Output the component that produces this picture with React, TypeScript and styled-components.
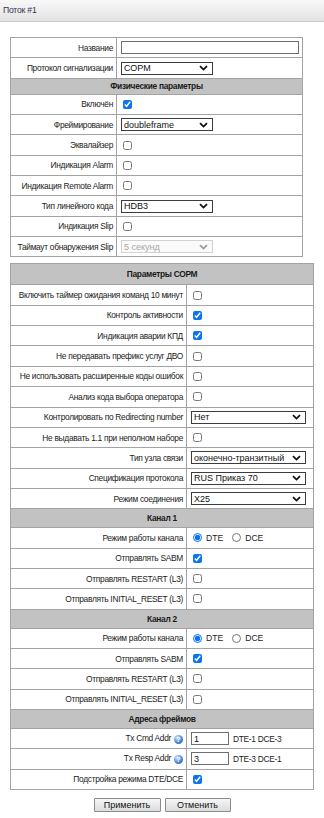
import styled, { createGlobalStyle } from "styled-components";

const GlobalStyle = createGlobalStyle`
    body {
        margin: 0;
        background: #fff;
        font-family: "Liberation Sans", Arial, sans-serif;
        font-size: 8.4px;
        letter-spacing: -0.3px;
        color: #1c1c1c;
    }
`;

const TitleBar = styled.div`
    height: 21px;
    line-height: 20px;
    padding-left: 3px;
    font-size: 8.6px;
    letter-spacing: -0.2px;
    color: #3a3550;
    background: linear-gradient(#f8f8f8, #e2e2e2);
    border-bottom: 1px solid #c9c9c9;
`;

const Content = styled.div`
    padding: 15px 10px 0 10px;
`;

const Table = styled.table<{ $width: number; $labelWidth: number }>`
    width: ${(p) => p.$width}px;
    border-collapse: collapse;
    table-layout: fixed;
    margin-bottom: 6px;

    col:first-child {
        width: ${(p) => p.$labelWidth}px;
    }
`;

const LabelCell = styled.td`
    height: 19.35px;
    padding: 0 3px 0 2px;
    border: 1px solid #a3a3a3;
    text-align: right;
    white-space: nowrap;
    vertical-align: middle;
`;

const ValueCell = styled.td`
    height: 19.35px;
    padding: 0 4px;
    border: 1px solid #a3a3a3;
    vertical-align: middle;
`;

const HeaderCell = styled.th<{ $height: number }>`
    height: ${(p) => p.$height}px;
    padding: 0;
    background: #c2c2c2;
    border: 1px solid #a3a3a3;
    font-weight: bold;
    color: #1a1a1a;
    text-align: center;
    vertical-align: middle;
`;

const Inline = styled.div`
    display: flex;
    align-items: center;
`;

const Check = styled.input.attrs({ type: "checkbox", readOnly: true })`
    width: 9px;
    height: 9px;
    margin: 0 0 0 2px;
    accent-color: #0b74f0;
    display: block;
`;

const Radio = styled.input.attrs({ type: "radio", readOnly: true })`
    width: 9px;
    height: 9px;
    margin: 0 4px 0 2px;
    accent-color: #0b74f0;
    display: block;
`;

const RadioText = styled.span`
    margin-right: 7px;
    font-size: 8.6px;
    letter-spacing: 0;
`;

const TextInput = styled.input.attrs({ type: "text", readOnly: true })<{ $width: number }>`
    width: ${(p) => p.$width}px;
    height: 13px;
    box-sizing: border-box;
    margin: 0;
    padding: 0 2px;
    border: 1px solid #6f6f6f;
    font-family: "Liberation Sans", Arial, sans-serif;
    font-size: 9px;
    color: #111;
    display: block;
`;

const SelectBox = styled.div<{ $width: number; $disabled?: boolean }>`
    width: ${(p) => p.$width}px;
    height: 13px;
    box-sizing: border-box;
    display: flex;
    align-items: center;
    justify-content: space-between;
    padding: 0 4px 0 2px;
    border: 1px solid ${(p) => (p.$disabled ? "#d2d2d2" : "#3c3c3c")};
    background: ${(p) => (p.$disabled ? "#fafafa" : "#fff")};
    color: ${(p) => (p.$disabled ? "#a6a6a6" : "#111")};
    font-size: 9px;
    letter-spacing: 0;
`;

const Hint = styled.span`
    margin-left: 4px;
`;

const HelpIcon = styled.span`
    display: inline-block;
    width: 9px;
    height: 9px;
    margin-left: 3px;
    border-radius: 50%;
    background: radial-gradient(circle at 35% 30%, #d6e6ff, #3f7fd6 60%, #2a5fb0);
    color: #fff;
    font-size: 7px;
    font-weight: bold;
    letter-spacing: 0;
    line-height: 9px;
    text-align: center;
    vertical-align: -1px;
`;

const ButtonRow = styled.div`
    width: 304px;
    display: flex;
    justify-content: center;
    gap: 4px;
    padding-top: 2px;
`;

const Button = styled.button<{ $width: number }>`
    width: ${(p) => p.$width}px;
    height: 14px;
    padding: 0;
    box-sizing: border-box;
    border: 1px solid #8a8a8a;
    border-radius: 1px;
    background: linear-gradient(#f6f6f6, #dcdcdc);
    font-family: "Liberation Sans", Arial, sans-serif;
    font-size: 9px;
    color: #111;
    line-height: 12px;
`;

function Chevron({ color }: { color: string }) {
    return (
        <svg width="9" height="6" viewBox="0 0 9 6">
            <path d="M1 1.2 L4.5 4.6 L8 1.2" fill="none" stroke={color} strokeWidth="1.8" />
        </svg>
    );
}

function Select({ value, width, disabled }: { value: string; width: number; disabled?: boolean }) {
    return (
        <SelectBox $width={width} $disabled={disabled}>
            <span>{value}</span>
            <Chevron color={disabled ? "#9a9a9a" : "#111"} />
        </SelectBox>
    );
}

function CheckRow({ label, checked }: { label: string; checked?: boolean }) {
    return (
        <tr>
            <LabelCell>{label}</LabelCell>
            <ValueCell>
                <Check checked={!!checked} />
            </ValueCell>
        </tr>
    );
}

function SelectRow({ label, value, width, disabled }: { label: string; value: string; width: number; disabled?: boolean }) {
    return (
        <tr>
            <LabelCell>{label}</LabelCell>
            <ValueCell>
                <Select value={value} width={width} disabled={disabled} />
            </ValueCell>
        </tr>
    );
}

function Header({ title, height }: { title: string; height: number }) {
    return (
        <tr>
            <HeaderCell colSpan={2} $height={height}>
                {title}
            </HeaderCell>
        </tr>
    );
}

function Channel({ n }: { n: number }) {
    return (
        <>
            <Header title={`Канал ${n}`} height={18} />
            <tr>
                <LabelCell>Режим работы канала</LabelCell>
                <ValueCell>
                    <Inline>
                        <Radio name={`ch${n}`} checked />
                        <RadioText>DTE</RadioText>
                        <Radio name={`ch${n}`} checked={false} />
                        <RadioText>DCE</RadioText>
                    </Inline>
                </ValueCell>
            </tr>
            <CheckRow label="Отправлять SABM" checked />
            <CheckRow label="Отправлять RESTART (L3)" />
            <CheckRow label="Отправлять INITIAL_RESET (L3)" />
        </>
    );
}

function AddrRow({ label, value, hint }: { label: string; value: string; hint: string }) {
    return (
        <tr>
            <LabelCell>
                {label}
                <HelpIcon>?</HelpIcon>
            </LabelCell>
            <ValueCell>
                <Inline>
                    <TextInput $width={38} value={value} />
                    <Hint>{hint}</Hint>
                </Inline>
            </ValueCell>
        </tr>
    );
}

export default function App(): JSX.Element {
    return (
        <>
            <GlobalStyle />
            <TitleBar>Поток #1</TitleBar>
            <Content>
                <Table $width={293} $labelWidth={106}>
                    <colgroup>
                        <col />
                        <col />
                    </colgroup>
                    <tbody>
                        <tr>
                            <LabelCell>Название</LabelCell>
                            <ValueCell>
                                <TextInput $width={178} value="" />
                            </ValueCell>
                        </tr>
                        <SelectRow label="Протокол сигнализации" value="СОРМ" width={92} />
                        <Header title="Физические параметры" height={15} />
                        <CheckRow label="Включён" checked />
                        <SelectRow label="Фреймирование" value="doubleframe" width={92} />
                        <CheckRow label="Эквалайзер" />
                        <CheckRow label="Индикация Alarm" />
                        <CheckRow label="Индикация Remote Alarm" />
                        <SelectRow label="Тип линейного кода" value="HDB3" width={92} />
                        <CheckRow label="Индикация Slip" />
                        <SelectRow label="Таймаут обнаружения Slip" value="5 секунд" width={92} disabled />
                    </tbody>
                </Table>

                <Table $width={304} $labelWidth={176}>
                    <colgroup>
                        <col />
                        <col />
                    </colgroup>
                    <tbody>
                        <Header title="Параметры СОРМ" height={20} />
                        <CheckRow label="Включить таймер ожидания команд 10 минут" />
                        <CheckRow label="Контроль активности" checked />
                        <CheckRow label="Индикация аварии КПД" checked />
                        <CheckRow label="Не передавать префикс услуг ДВО" />
                        <CheckRow label="Не использовать расширенные коды ошибок" />
                        <CheckRow label="Анализ кода выбора оператора" />
                        <SelectRow label="Контролировать по Redirecting number" value="Нет" width={115} />
                        <CheckRow label="Не выдавать 1.1 при неполном наборе" />
                        <SelectRow label="Тип узла связи" value="оконечно-транзитный" width={115} />
                        <SelectRow label="Спецификация протокола" value="RUS Приказ 70" width={115} />
                        <SelectRow label="Режим соединения" value="X25" width={115} />
                        <Channel n={1} />
                        <Channel n={2} />
                        <Header title="Адреса фреймов" height={18} />
                        <AddrRow label="Tx Cmd Addr" value="1" hint="DTE-1 DCE-3" />
                        <AddrRow label="Tx Resp Addr" value="3" hint="DTE-3 DCE-1" />
                        <CheckRow label="Подстройка режима DTE/DCE" checked />
                    </tbody>
                </Table>

                <ButtonRow>
                    <Button $width={67}>Применить</Button>
                    <Button $width={66}>Отменить</Button>
                </ButtonRow>
            </Content>
        </>
    );
}
